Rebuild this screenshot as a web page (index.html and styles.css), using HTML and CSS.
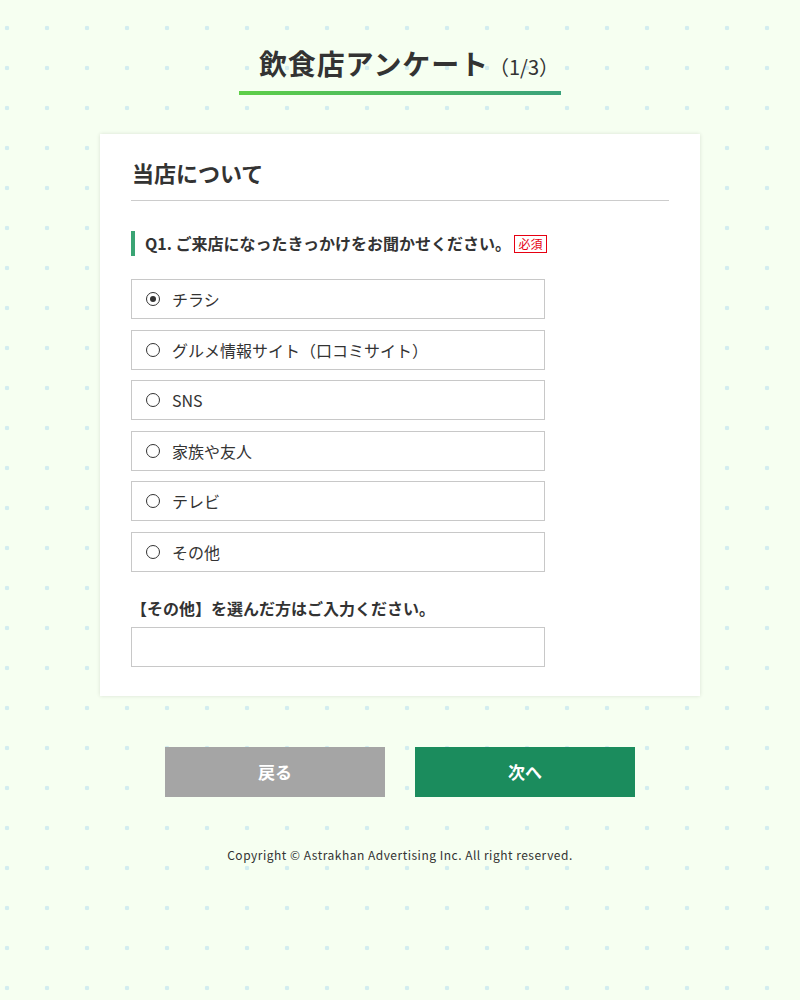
FILE: index.html
```html
<!DOCTYPE html>
<html lang="ja">
<head>
<meta charset="utf-8">
<title>飲食店アンケート</title>
<link rel="stylesheet" href="styles.css">
</head>
<body>
<header class="page-header">
  <h1 class="page-title">飲食店アンケート<span class="step">（1/3）</span></h1>
</header>
<main class="card">
  <h2 class="section-title">当店について</h2>
  <div class="question">
    <h3 class="q-title">Q1. ご来店になったきっかけをお聞かせください。<span class="required">必須</span></h3>
    <ul class="options">
      <li class="option checked"><span class="radio"></span>チラシ</li>
      <li class="option"><span class="radio"></span>グルメ情報サイト（口コミサイト）</li>
      <li class="option"><span class="radio"></span>SNS</li>
      <li class="option"><span class="radio"></span>家族や友人</li>
      <li class="option"><span class="radio"></span>テレビ</li>
      <li class="option"><span class="radio"></span>その他</li>
    </ul>
    <p class="other-label">【その他】を選んだ方はご入力ください。</p>
    <div class="text-input"></div>
  </div>
</main>
<div class="actions">
  <button class="btn btn-back">戻る</button>
  <button class="btn btn-next">次へ</button>
</div>
<footer class="footer">Copyright © Astrakhan Advertising Inc. All right reserved.</footer>
</body>
</html>
```
FILE: styles.css
```css
html, body {
  margin: 0;
  padding: 0;
}
body {
  font-family: "Noto Sans CJK JP", "Noto Sans", sans-serif;
  color: #333;
  min-height: 1000px;
  background-color: #f6fff1;
  background-image: radial-gradient(circle at 20px 20px, #d3edf0 0, #d3edf0 2px, rgba(211,237,240,0) 2.6px);
  background-size: 40px 40px;
  background-position: -13px 8px;
}
.page-header {
  text-align: center;
  padding-top: 42px;
}
.page-title {
  display: inline-block;
  margin: 0;
  padding: 0 2px 7px 20px;
  font-size: 28px;
  line-height: 42px;
  height: 42px;
  font-weight: 700;
  letter-spacing: 0.9px;
  border-bottom: 4px solid #4cbb5a;
  border-image: linear-gradient(to right, #5ecf48, #3aa27c) 1;
}
.step {
  font-size: 20px;
  line-height: 1;
  font-weight: 400;
  letter-spacing: 0;
}
.card {
  display: block;
  width: 538px;
  margin: 39px auto 0;
  padding: 22px 31px 29px;
  background: #fff;
  box-shadow: 0 0 4px rgba(0,0,0,0.12);
}
.section-title {
  margin: 0;
  font-size: 22px;
  line-height: 33px;
  font-weight: 700;
  padding: 0 0 11px 1px;
  border-bottom: 1px solid #ccc;
}
.question {
  padding-top: 30px;
}
.q-title {
  margin: 0;
  font-size: 16px;
  line-height: 25px;
  font-weight: 700;
  border-left: 4px solid #3aa474;
  padding-left: 10px;
  display: flex;
  align-items: center;
}
.required {
  display: inline-block;
  margin-left: 3px;
  border: 1px solid #e60012;
  color: #e60012;
  font-size: 12px;
  font-weight: 400;
  line-height: 16px;
  padding: 0 3.5px;
}
.options {
  list-style: none;
  margin: 23px 0 0;
  padding: 0;
  width: 414px;
  display: flex;
  flex-direction: column;
  gap: 10.5px;
}
.option {
  box-sizing: border-box;
  height: 40px;
  border: 1px solid #c8c8c8;
  display: flex;
  align-items: center;
  padding-left: 14px;
  font-size: 16px;
  color: #333;
}
.radio {
  box-sizing: border-box;
  width: 14px;
  height: 14px;
  border: 1.5px solid #333;
  border-radius: 50%;
  margin-right: 12px;
  position: relative;
  flex: none;
}
.option.checked .radio::after {
  content: "";
  position: absolute;
  left: 50%;
  top: 50%;
  width: 6px;
  height: 6px;
  margin: -3px 0 0 -3px;
  border-radius: 50%;
  background: #333;
}
.other-label {
  margin: 25px 0 8px;
  font-size: 16px;
  line-height: 22px;
  font-weight: 700;
}
.text-input {
  box-sizing: border-box;
  width: 414px;
  height: 40px;
  border: 1px solid #c8c8c8;
  background: #fff;
}
.actions {
  display: flex;
  justify-content: center;
  gap: 30px;
  margin-top: 51px;
}
.btn {
  width: 220px;
  height: 50px;
  border: none;
  font-family: inherit;
  font-size: 17px;
  font-weight: 700;
  color: #fff;
  padding: 0;
}
.btn-back {
  background: #a5a5a5;
}
.btn-next {
  background: #1b8c5d;
}
.footer {
  margin-top: 49px;
  text-align: center;
  font-size: 12px;
  line-height: 18px;
  letter-spacing: 0.5px;
  font-weight: 400;
  color: #333;
}
```
